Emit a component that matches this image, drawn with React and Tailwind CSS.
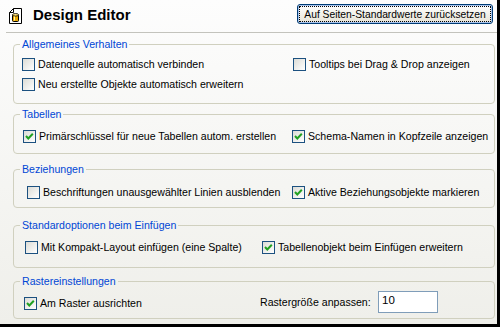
import React from "react";

const font = { fontFamily: '"Liberation Sans", Arial, sans-serif' };

const Check = ({ checked }) => (
  <span className="inline-flex items-center justify-center w-[13px] h-[13px] shrink-0 border border-[#1c5180] bg-linear-to-br from-[#dcdcd6] to-white">
    {checked && (
      <svg width="11" height="11" viewBox="0 0 11 11">
        <polyline
          points="2,5 4.3,7.5 8.8,2.8"
          fill="none"
          stroke="#21a121"
          strokeWidth="2"
        />
      </svg>
    )}
  </span>
);

const Option = ({ checked, children, className = "" }) => (
  <label className={`flex items-center gap-[3px] leading-[13px] h-[13px] ${className}`}>
    <Check checked={checked} />
    <span className="whitespace-nowrap">{children}</span>
  </label>
);

const Group = ({ title, className, children }) => (
  <fieldset className={`border border-[#d0d0bf] rounded-[4px] ${className}`}>
    <legend className="ml-[6px] px-[2px] leading-[13px] text-[#0046d5]">{title}</legend>
    {children}
  </fieldset>
);

const DocIcon = () => (
  <svg width="13" height="16" viewBox="0 0 13 16">
    <path d="M4.5 0.5H12.5V15.5H0.5V4.5Z" fill="#fff" stroke="#000" />
    <path d="M4.5 0.5V4.5H0.5" fill="none" stroke="#000" />
    <rect x="3.5" y="6.5" width="6" height="7" rx="1" fill="#e8a800" stroke="#000" />
    <ellipse cx="6.5" cy="6.8" rx="3" ry="1.3" fill="#ffe27a" stroke="#000" strokeWidth="0.8" />
    <rect x="5" y="8.5" width="1" height="4" fill="#fff3b0" />
  </svg>
);

export default function App() {
  return (
    <div
      style={font}
      className="w-[500px] h-[327px] border-r-[3px] border-b-[3px] border-black bg-linear-to-b from-[#fdfdfd] to-[#efefea] text-[10.6px] text-black overflow-hidden"
    >
      {/* Header */}
      <div className="flex h-[32px]">
        <div className="ml-[9px] mt-[8px]">
          <DocIcon />
        </div>
        <h1 className="ml-[11px] mt-[6px] text-[15px] font-bold leading-[18px]">Design Editor</h1>
        <button className="ml-auto mt-[4px] mr-[4px] w-[196px] h-[20px] rounded-[3px] border border-[#003c74] bg-linear-to-b from-white to-[#e6e3d6] p-[1px] shadow-[inset_0_0_0_1px_#a9c4ee]">
          <span className="flex items-center justify-center h-full border border-dotted border-black leading-[13px] text-[10.3px] whitespace-nowrap overflow-hidden">
            Auf Seiten-Standardwerte zurücksetzen
          </span>
        </button>
      </div>
      <div className="h-px bg-[#c3c3bd] ml-[6px]" />

      <div className="ml-[13px] mr-[2px]">
        <Group title="Allgemeines Verhalten" className="mt-[5px] h-[66px]">
          <div className="pt-[7px] pl-[8px] flex flex-col gap-[7px]">
            <div className="flex">
              <Option className="w-[271px]">Datenquelle automatisch verbinden</Option>
              <Option>Tooltips bei Drag &amp; Drop anzeigen</Option>
            </div>
            <Option>Neu erstellte Objekte automatisch erweitern</Option>
          </div>
        </Group>

        <Group title="Tabellen" className="mt-[4px] h-[46px]">
          <div className="pt-[9px] pl-[9px] flex">
            <Option checked className="w-[269px]">Primärschlüssel für neue Tabellen autom. erstellen</Option>
            <Option checked>Schema-Namen in Kopfzeile anzeigen</Option>
          </div>
        </Group>

        <Group title="Beziehungen" className="mt-[9px] h-[45px]">
          <div className="pt-[10px] pl-[13px] flex">
            <Option className="w-[265px]">Beschriftungen unausgewählter Linien ausblenden</Option>
            <Option checked>Aktive Beziehungsobjekte markieren</Option>
          </div>
        </Group>

        <Group title="Standardoptionen beim Einfügen" className="mt-[11px] h-[49px]">
          <div className="pt-[9px] pl-[11px] flex">
            <Option className="w-[237px]">Mit Kompakt-Layout einfügen (eine Spalte)</Option>
            <Option checked>Tabellenobjekt beim Einfügen erweitern</Option>
          </div>
        </Group>

        <Group title="Rastereinstellungen" className="mt-[7px] h-[44px]">
          <div className="pt-[3px] pl-[10px] flex items-center">
            <Option checked className="w-[236px] mt-[3px]">Am Raster ausrichten</Option>
            <span className="leading-[13px] whitespace-nowrap">Rastergröße anpassen:</span>
            <div className="ml-auto mr-[56px] w-[60px] h-[22px] border border-[#7f9db9] bg-white pl-[3px] pt-[2px] text-[11.5px] leading-[13px]">
              10
            </div>
          </div>
        </Group>
      </div>
    </div>
  );
}
